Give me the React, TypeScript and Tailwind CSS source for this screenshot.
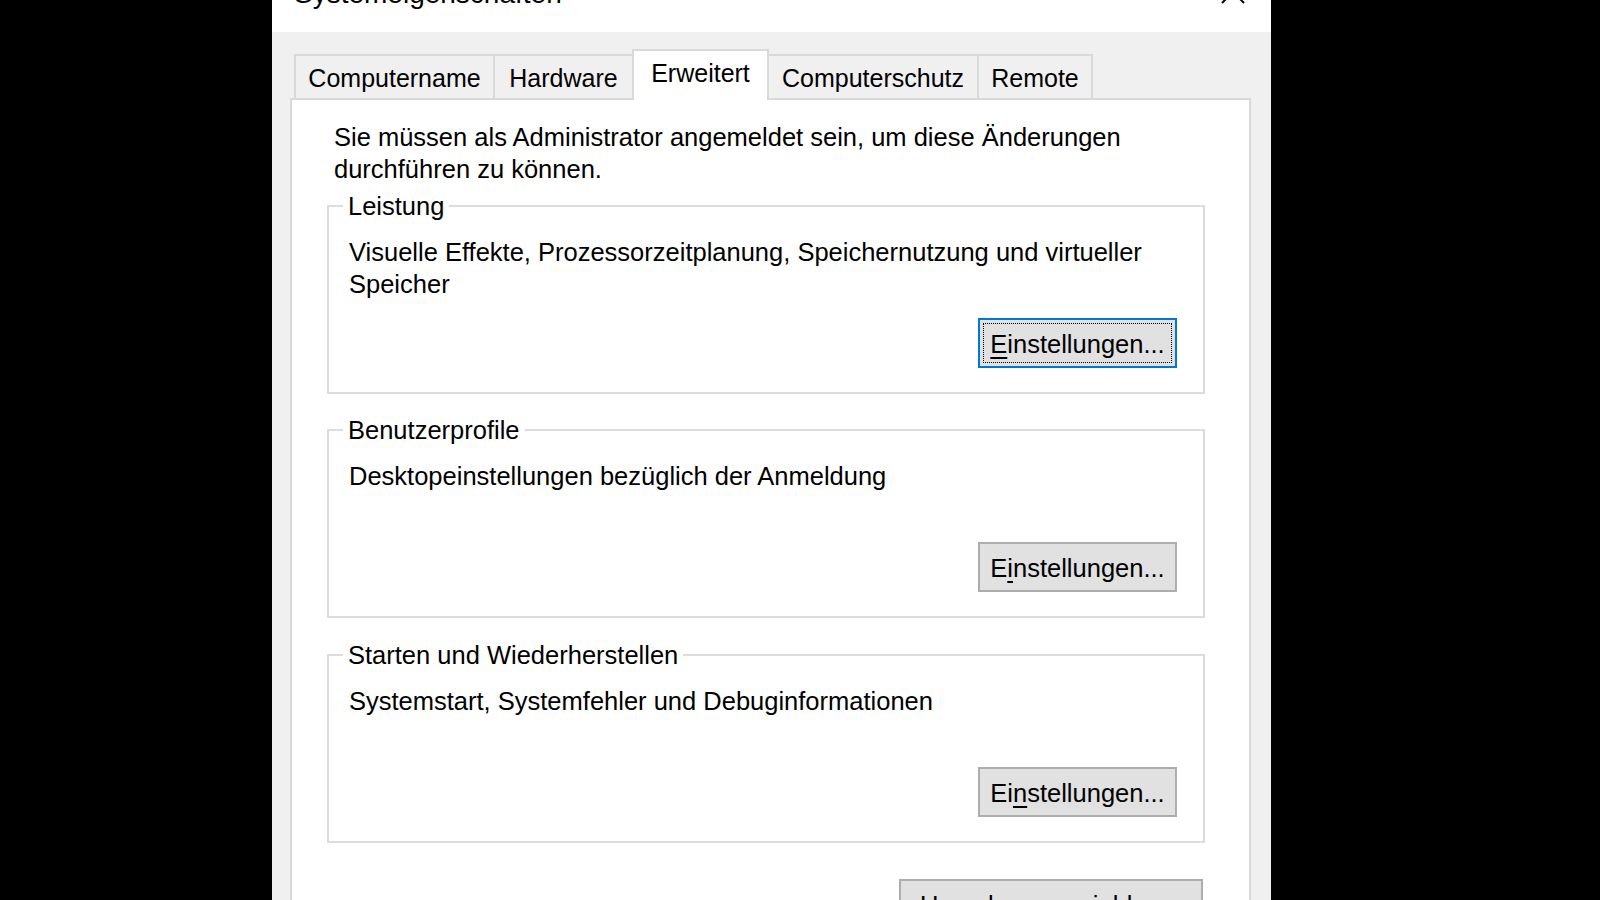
import type { ReactNode } from "react";

const tabs = [
  { label: "Computername", width: "w-[201px]", active: false },
  { label: "Hardware", width: "w-[141px]", active: false },
  { label: "Erweitert", width: "w-[137px]", active: true },
  { label: "Computerschutz", width: "w-[212px]", active: false },
  { label: "Remote", width: "w-[116px]", active: false },
];

function Tab({ label, width, active, first }: { label: string; width: string; active: boolean; first: boolean }) {
  if (active) {
    return (
      <div className={`relative z-10 -mb-[2px] -ml-[2px] h-[51px] border-2 border-b-0 border-[#d9d9d9] bg-white pt-[7px] text-center leading-[31.5px] ${width}`}>
        {label}
      </div>
    );
  }
  return (
    <div className={`h-[44px] border-2 border-b-0 border-[#d9d9d9] bg-[#f0f0f0] pt-[6.5px] text-center leading-[31.5px] ${first ? "" : "-ml-[2px]"} ${width}`}>
      {label}
    </div>
  );
}

function WinButton({ children, focused = false, width = "w-[199px]" }: { children: ReactNode; focused?: boolean; width?: string }) {
  if (focused) {
    return (
      <button type="button" className={`h-[50px] border-2 border-[#0078d7] bg-[#e1e1e1] p-[3px] ${width}`}>
        <span className="flex h-full w-full items-center justify-center border border-dotted border-black pt-[3px] leading-none">{children}</span>
      </button>
    );
  }
  return (
    <button type="button" className={`flex h-[50px] items-center justify-center border-2 border-[#adadad] bg-[#e1e1e1] pt-[3px] leading-none ${width}`}>
      {children}
    </button>
  );
}

function Acc({ children }: { children: string }) {
  return <span className="underline decoration-2 underline-offset-[4px]">{children}</span>;
}

function Group({ title, text, button, className }: { title: string; text: string; button: ReactNode; className: string }) {
  return (
    <fieldset className={`border-2 border-[#dcdcdc] pl-[14px] pr-[26px] ${className}`}>
      <legend className="px-[5px] leading-[32px]">{title}</legend>
      <div className="ml-[6px] flex h-[170px] flex-col pt-[15px] pb-[24px]">
        <p className="leading-[31.5px]">{text}</p>
        <div className="mt-auto self-end">{button}</div>
      </div>
    </fieldset>
  );
}

export default function App() {
  return (
    <div className="h-[900px] w-full overflow-hidden bg-black font-['Liberation_Sans',Arial,sans-serif] text-[25px] text-black">
      <div className="-mt-[40px] ml-[272px] w-[999px] bg-[#f0f0f0]">
        {/* title bar, mostly above the screen edge */}
        <div className="flex h-[72px] items-start justify-between bg-white pl-[22px] pr-[26px]">
          <span className="pt-[18px] text-[28px] leading-[32px]">Systemeigenschaften</span>
          <svg className="mt-[20px]" width="24" height="24" viewBox="0 0 24 24">
            <path d="M1 1 L23 23 M23 1 L1 23" stroke="#000" strokeWidth="2" fill="none" />
          </svg>
        </div>

        <div className="pl-[18px] pr-[20px] pt-[17px] pb-[40px]">
          <div className="flex items-end pl-[4px]">
            {tabs.map((t, i) => (
              <Tab key={t.label} label={t.label} width={t.width} active={t.active} first={i === 0} />
            ))}
          </div>

          <div className="border-2 border-[#d9d9d9] bg-white pl-[35px] pr-[44px] pt-[22px] pb-[30px] text-[25.5px]">
            <p className="ml-[7px] leading-[31.5px]">
              Sie müssen als Administrator angemeldet sein, um diese Änderungen durchführen zu können.
            </p>

            <Group
              className="mt-[5px]"
              title="Leistung"
              text="Visuelle Effekte, Prozessorzeitplanung, Speichernutzung und virtueller Speicher"
              button={<WinButton focused><Acc>E</Acc>instellungen...</WinButton>}
            />
            <Group
              className="mt-[20px]"
              title="Benutzerprofile"
              text="Desktopeinstellungen bezüglich der Anmeldung"
              button={<WinButton>E<Acc>i</Acc>nstellungen...</WinButton>}
            />
            <Group
              className="mt-[21px]"
              title="Starten und Wiederherstellen"
              text="Systemstart, Systemfehler und Debuginformationen"
              button={<WinButton>Ei<Acc>n</Acc>stellungen...</WinButton>}
            />

            <div className="mt-[36px] flex justify-end pr-[2px]">
              <WinButton width="w-[304px]">Umgebungsvariablen...</WinButton>
            </div>
          </div>
        </div>
      </div>
    </div>
  );
}
